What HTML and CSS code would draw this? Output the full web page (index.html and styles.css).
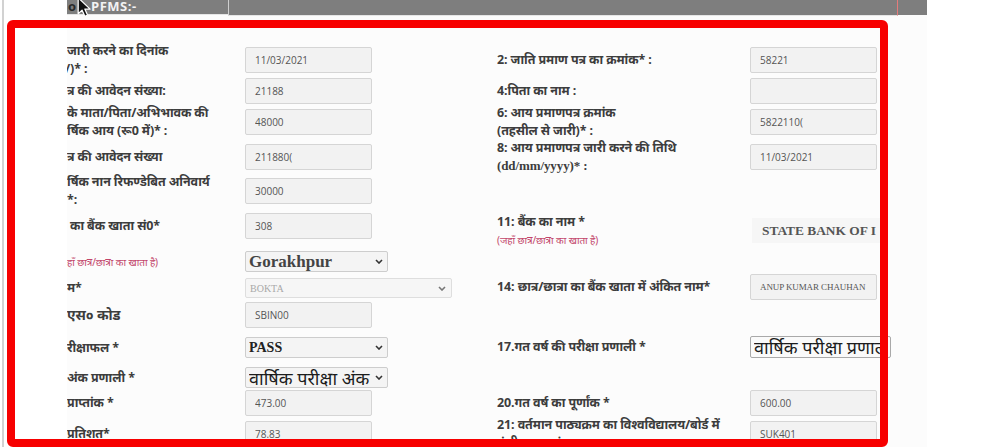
FILE: index.html
```html
<!DOCTYPE html>
<html lang="hi">
<head>
<meta charset="utf-8">
<title>PFMS Form</title>
<link rel="stylesheet" href="styles.css">
</head>
<body>
<div class="page">
  <div class="rail"></div>
  <div class="panel">
    <div class="topbar">
      <div class="tb-title"><span class="tb-cut">o</span><span class="tb-text">PFMS:-</span></div>
      <div class="tb-box"></div>
    </div>
    <div class="form">
      <div class="col">
        <div class="row">
          <div class="lbl lbl-l">जारी करने का दिनांक<br><span class="cut">/)* :</span></div>
          <input class="in" value="11/03/2021" readonly>
        </div>
        <div class="row mt5">
          <div class="lbl lbl-l">त्र की आवेदन संख्या:</div>
          <input class="in" value="21188" readonly>
        </div>
        <div class="row mt5">
          <div class="lbl lbl-l">के माता/पिता/अभिभावक की<br>र्षिक आय (रू0 में)* :</div>
          <input class="in" value="48000" readonly>
        </div>
        <div class="row mt9">
          <div class="lbl lbl-l">त्र की आवेदन संख्या</div>
          <input class="in" value="211880(" readonly>
        </div>
        <div class="row mt8">
          <div class="lbl lbl-l">र्षिक नान रिफण्डेबित अनिवार्य<br>*:</div>
          <input class="in" value="30000" readonly>
        </div>
        <div class="row mt9">
          <div class="lbl lbl-l ind3">का बैंक खाता सं0*</div>
          <input class="in" value="308" readonly>
        </div>
        <div class="row h21 mt12">
          <div class="lbl lbl-l note">हाँ छात्र/छात्रा का खाता है)</div>
          <div class="sel sel-l big-lat"><span class="sel-txt">Gorakhpur</span><svg class="chev" viewBox="0 0 8 5"><path d="M1 1l3 3 3-3"/></svg></div>
        </div>
        <div class="row h20 mt6">
          <div class="lbl lbl-l">म*</div>
          <div class="sel sel-wide dis"><span class="sel-txt">BOKTA</span><svg class="chev" viewBox="0 0 8 5"><path d="M1 1l3 3 3-3"/></svg></div>
        </div>
        <div class="row mt4">
          <div class="lbl lbl-l lbl-big">एस० कोड</div>
          <input class="in" value="SBIN00" readonly>
        </div>
        <div class="row h21 mt9">
          <div class="lbl lbl-l">रीक्षाफल *</div>
          <div class="sel sel-l pass"><span class="sel-txt">PASS</span><svg class="chev" viewBox="0 0 8 5"><path d="M1 1l3 3 3-3"/></svg></div>
        </div>
        <div class="row h21 mt9">
          <div class="lbl lbl-l">अंक प्रणाली *</div>
          <div class="sel sel-l big-hi"><span class="sel-txt">वार्षिक परीक्षा अंक</span><svg class="chev" viewBox="0 0 8 5"><path d="M1 1l3 3 3-3"/></svg></div>
        </div>
        <div class="row mt2">
          <div class="lbl lbl-l">प्राप्तांक *</div>
          <input class="in" value="473.00" readonly>
        </div>
        <div class="row mt5">
          <div class="lbl lbl-l">प्रतिशत*</div>
          <input class="in" value="78.83" readonly>
        </div>
      </div>

      <div class="col">
        <div class="row">
          <div class="lbl lbl-r">2: जाति प्रमाण पत्र का क्रमांक* :</div>
          <input class="in" value="58221" readonly>
        </div>
        <div class="row mt5">
          <div class="lbl lbl-r">4:पिता का नाम :</div>
          <input class="in" value="" readonly>
        </div>
        <div class="row mt5">
          <div class="lbl lbl-r">6: आय प्रमाणपत्र क्रमांक<br>(तहसील से जारी)* :</div>
          <input class="in" value="5822110(" readonly>
        </div>
        <div class="row mt9">
          <div class="lbl lbl-r">8: आय प्रमाणपत्र जारी करने की तिथि<br><span class="lat">(dd/mm/yyyy)* :</span></div>
          <input class="in" value="11/03/2021" readonly>
        </div>
        <div class="row h25 mt48">
          <div class="lbl lbl-r">11: बैंक का नाम *<br><span class="note">(जहाँ छात्र/छात्रा का खाता है)</span></div>
          <div class="bank">STATE BANK OF I</div>
        </div>
        <div class="row mt31">
          <div class="lbl lbl-r">14: छात्र/छात्रा का बैंक खाता में अंकित नाम*</div>
          <input class="in in-name" value="ANUP KUMAR CHAUHAN" readonly>
        </div>
        <div class="row h22 mt36">
          <div class="lbl lbl-r">17.गत वर्ष की परीक्षा प्रणाली *</div>
          <div class="sel sel-r big-hi"><span class="sel-txt">वार्षिक परीक्षा प्रणाली</span></div>
        </div>
        <div class="row mt32">
          <div class="lbl lbl-r">20.गत वर्ष का पूर्णांक *</div>
          <input class="in" value="600.00" readonly>
        </div>
        <div class="row mt5">
          <div class="lbl lbl-r">21: वर्तमान पाठ्यक्रम का विश्वविद्यालय/बोर्ड में<br>पंजीकृत क्रमांक</div>
          <input class="in" value="SUK401" readonly>
        </div>
      </div>
    </div>
  </div>
  <svg class="cursor" viewBox="0 0 14 20"><path d="M1.5 1.5v14l3.4-3.2 2.4 5.4 2.4-1-2.4-5.3h4.6z"/></svg>
  <div class="mark"></div>
</div>
</body>
</html>
```
FILE: styles.css
```css
* { box-sizing: border-box; }
body {
  margin: 0;
  background: #ffffff;
  font-family: "Noto Sans", "Noto Sans Devanagari", "Lohit Devanagari", sans-serif;
}
.page {
  position: relative;
  width: 1000px;
  height: 447px;
  overflow: hidden;
  display: flex;
}
.rail {
  width: 2px;
  margin-left: 2px;
  height: 100%;
  background: #d2d2d2;
}
.panel {
  margin-left: 63px;
  width: 860px;
  height: 447px;
  background: #fcfcfc;
  overflow: hidden;
}
.topbar {
  height: 15px;
  background: #7e7e7e;
  display: flex;
}
.tb-title {
  width: 161px;
  height: 15px;
  border-bottom: 1px solid #e6e6e6;
  display: flex;
  align-items: flex-start;
  font-family: "Open Sans", sans-serif;
  font-weight: 700;
  font-size: 13px;
  line-height: 13px;
}
.tb-cut { color: #2a2a2a; margin-left: 1px; }
.tb-text { color: #f2f2f2; margin-left: 15px; letter-spacing: 0.5px; }
.tb-box {
  width: 670px;
  height: 16px;
  border-bottom: 1px solid #e6e6e6;
  border-left: 1px solid #cfcfcf;
  border-right: 1px solid #e47b7b;
}
.form {
  display: grid;
  grid-template-columns: 430px 430px;
  padding-top: 32px;
}
.col { display: flex; flex-direction: column; }
.row { display: flex; align-items: center; height: 26px; }
.h20 { height: 20px; }
.h21 { height: 21px; }
.h22 { height: 22px; }
.h25 { height: 25px; }
.mt2 { margin-top: 2px; }
.mt4 { margin-top: 4px; }
.mt5 { margin-top: 5px; }
.mt6 { margin-top: 6px; }
.mt8 { margin-top: 8px; }
.mt9 { margin-top: 9px; }
.mt12 { margin-top: 12px; }
.mt31 { margin-top: 31px; }
.mt32 { margin-top: 32px; }
.mt36 { margin-top: 36px; }
.mt48 { margin-top: 48px; }

.lbl {
  flex: none;
  font-size: 12.5px;
  line-height: 18px;
  font-weight: 700;
  color: #3d3d3d;
  white-space: nowrap;
  letter-spacing: -0.1px;
}
.lbl-l { width: 178px; }
.lbl-r { width: 253px; }
.ind3 { padding-left: 3px; }
.lbl-big { font-size: 14px; }
.cut { margin-left: -2px; }
.lat { font-family: "Liberation Serif", serif; font-size: 13px; }
.note {
  font-size: 10px;
  font-weight: 400;
  color: #c2456a;
}

.in {
  flex: none;
  width: 127px;
  height: 26px;
  background: #f2f2f2;
  border: 1px solid #d5d5d5;
  border-radius: 2px;
  padding: 0 0 0 9px;
  font-family: "Open Sans", sans-serif;
  font-size: 10px;
  color: #555555;
  outline: none;
}
.in-name {
  font-family: "Liberation Serif", serif;
  font-size: 9px;
  padding-left: 9px;
  letter-spacing: -0.1px;
}

.sel {
  flex: none;
  height: 21px;
  background: #f4f4f4;
  border: 1px solid #cdcdcd;
  border-radius: 2px;
  display: flex;
  align-items: center;
  padding: 0 4px 0 3px;
  overflow: hidden;
  white-space: nowrap;
}
.sel-txt {
  flex: 1;
  min-width: 0;
  overflow: hidden;
}
.sel-l { width: 143px; }
.sel-wide {
  width: 207px;
  height: 20px;
  background: #f6f6f6;
  border-color: #dedede;
  padding-left: 4px;
  padding-right: 5px;
}
.sel-r {
  width: 141px;
  height: 22px;
  border-color: #a9a9a9;
  background: #fafafa;
}
.chev {
  flex: none;
  width: 8px;
  height: 5px;
  margin-left: 2px;
  fill: none;
  stroke: #333;
  stroke-width: 1.6;
}
.dis .chev { stroke: #777; }
.big-lat {
  font-family: "Liberation Serif", serif;
  font-weight: 700;
  font-size: 17px;
  color: #444;
}
.pass {
  font-family: "Liberation Serif", serif;
  font-weight: 700;
  font-size: 14px;
  color: #222;
}
.dis {
  font-family: "Liberation Serif", serif;
  font-size: 10px;
  color: #a8a8a8;
}
.big-hi {
  font-size: 18px;
  line-height: 20px;
  color: #1c1c1c;
}
.bank {
  flex: none;
  margin-left: 2px;
  width: 133px;
  height: 25px;
  background: #f6f6f6;
  padding-left: 10px;
  display: flex;
  align-items: center;
  overflow: hidden;
  white-space: nowrap;
  font-family: "Liberation Serif", serif;
  font-weight: 700;
  font-size: 13.4px;
  color: #555;
}

.cursor {
  position: absolute;
  left: 76px;
  top: -4px;
  width: 17px;
  height: 23px;
  fill: #111;
  stroke: #fff;
  stroke-width: 1.1;
  stroke-linejoin: round;
}
.mark {
  position: absolute;
  left: 7px;
  top: 20px;
  width: 881px;
  height: 427px;
  border: 8px solid #f70000;
  border-radius: 6px;
  pointer-events: none;
}
```
